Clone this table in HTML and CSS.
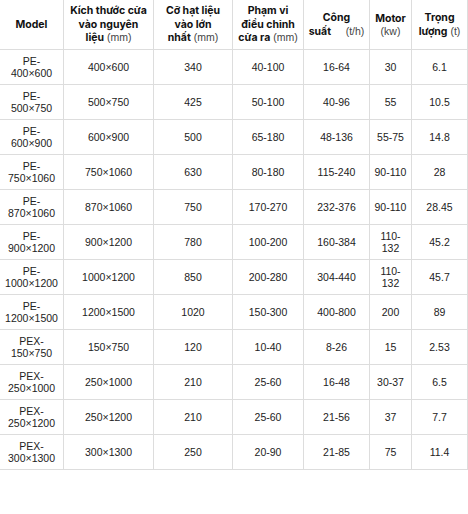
FILE: index.html
```html
<!DOCTYPE html>
<html lang="vi">
<head>
<meta charset="utf-8">
<link rel="stylesheet" href="styles.css">
</head>
<body>
<table class="spec">
  <colgroup>
    <col class="c1"><col class="c2"><col class="c3"><col class="c4"><col class="c5"><col class="c6"><col class="c7">
  </colgroup>
  <thead>
    <tr>
      <th><b>Model</b></th>
      <th><b>Kích thước cửa<br>vào nguyên<br>liệu</b> (mm)</th>
      <th><b>Cỡ hạt liệu<br>vào lớn<br>nhất</b> (mm)</th>
      <th><b>Phạm vi<br>điều chỉnh<br>cửa ra</b> (mm)</th>
      <th><b>Công<br>suất</b>&nbsp;&nbsp;&nbsp;&nbsp;&nbsp;(t/h)</th>
      <th><b>Motor</b><br>(kw)</th>
      <th><b>Trọng<br>lượng</b> (t)</th>
    </tr>
  </thead>
  <tbody>
    <tr><td>PE-<br>400×600</td><td>400×600</td><td>340</td><td>40-100</td><td>16-64</td><td>30</td><td>6.1</td></tr>
    <tr><td>PE-<br>500×750</td><td>500×750</td><td>425</td><td>50-100</td><td>40-96</td><td>55</td><td>10.5</td></tr>
    <tr><td>PE-<br>600×900</td><td>600×900</td><td>500</td><td>65-180</td><td>48-136</td><td>55-75</td><td>14.8</td></tr>
    <tr><td>PE-<br>750×1060</td><td>750×1060</td><td>630</td><td>80-180</td><td>115-240</td><td>90-110</td><td>28</td></tr>
    <tr><td>PE-<br>870×1060</td><td>870×1060</td><td>750</td><td>170-270</td><td>232-376</td><td>90-110</td><td>28.45</td></tr>
    <tr><td>PE-<br>900×1200</td><td>900×1200</td><td>780</td><td>100-200</td><td>160-384</td><td>110-<br>132</td><td>45.2</td></tr>
    <tr><td>PE-<br>1000×1200</td><td>1000×1200</td><td>850</td><td>200-280</td><td>304-440</td><td>110-<br>132</td><td>45.7</td></tr>
    <tr><td>PE-<br>1200×1500</td><td>1200×1500</td><td>1020</td><td>150-300</td><td>400-800</td><td>200</td><td>89</td></tr>
    <tr><td>PEX-<br>150×750</td><td>150×750</td><td>120</td><td>10-40</td><td>8-26</td><td>15</td><td>2.53</td></tr>
    <tr><td>PEX-<br>250×1000</td><td>250×1000</td><td>210</td><td>25-60</td><td>16-48</td><td>30-37</td><td>6.5</td></tr>
    <tr><td>PEX-<br>250×1200</td><td>250×1200</td><td>210</td><td>25-60</td><td>21-56</td><td>37</td><td>7.7</td></tr>
    <tr><td>PEX-<br>300×1300</td><td>300×1300</td><td>250</td><td>20-90</td><td>21-85</td><td>75</td><td>11.4</td></tr>
  </tbody>
</table>
</body>
</html>
```

FILE: styles.css
```css
html, body {
  margin: 0;
  padding: 0;
  background: #ffffff;
}

.spec {
  width: 468px;
  table-layout: fixed;
  border-collapse: separate;
  border-spacing: 0;
  font-family: "Liberation Sans", Arial, sans-serif;
  color: #222;
}

.c1 { width: 64px; }
.c2 { width: 90px; }
.c3 { width: 79px; }
.c4 { width: 71px; }
.c5 { width: 66px; }
.c6 { width: 42px; }
.c7 { width: 56px; }

.spec th,
.spec td {
  box-sizing: border-box;
  border-right: 1px solid #dddddd;
  border-bottom: 1px solid #dddddd;
  text-align: center;
  vertical-align: middle;
}

.spec th {
  height: 50px;
  padding: 0 2px;
  font-size: 10.5px;
  line-height: 12.5px;
  font-weight: 400;
  color: #444;
  white-space: nowrap;
}

.spec th b {
  font-family: "Inter", "Liberation Sans", sans-serif;
  font-weight: 700;
  font-size: 10.5px;
  color: #111;
}

.spec td {
  height: 35px;
  padding: 0 2px;
  font-size: 10.5px;
  line-height: 12px;
}
```
